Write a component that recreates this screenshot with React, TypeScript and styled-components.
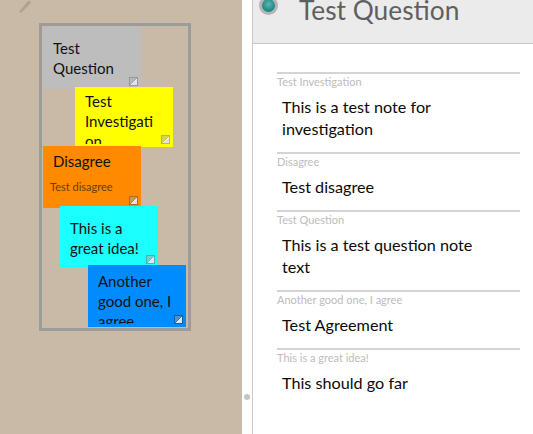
import styled, { createGlobalStyle } from 'styled-components'

const GlobalStyle = createGlobalStyle`
  html, body {
    margin: 0;
    padding: 0;
    height: 100%;
    overflow: hidden;
    font-family: 'Lato', 'Noto Sans', sans-serif;
  }
`

const Page = styled.div`
  display: flex;
  width: 533px;
  height: 434px;
  overflow: hidden;
  background: #fff;
`

const Canvas = styled.div`
  position: relative;
  width: 242px;
  flex: none;
  background: #c9baa8;
`

const Pencil = styled.svg`
  position: absolute;
  left: 17px;
  top: 0;
`

const Frame = styled.div`
  position: absolute;
  left: 39px;
  top: 23px;
  width: 146px;
  height: 302px;
  border: 3px solid #9c9c9c;
`

const Note = styled.div<{ x: number; y: number; h: number; bg: string }>`
  position: absolute;
  left: ${({ x }) => x}px;
  top: ${({ y }) => y}px;
  width: 98px;
  height: ${({ h }) => h}px;
  background: ${({ bg }) => bg};
  overflow: hidden;
`

const NoteText = styled.div<{ top: number; clip?: number }>`
  margin: ${({ top }) => top}px 13px 0 10px;
  max-height: ${({ clip }) => clip ?? 60}px;
  overflow: hidden;
  font-size: 15px;
  line-height: 20px;
  color: #111;
  overflow-wrap: anywhere;
`

const NoteSub = styled.div`
  margin: 9px 0 0 7px;
  font-size: 11px;
  line-height: 14px;
  color: #6b3d00;
`

const Resize = styled.svg`
  position: absolute;
  right: 3px;
  bottom: 3px;
`

const Splitter = styled.div`
  position: relative;
  width: 10px;
  flex: none;
  background: #fff;
`

const Dot = styled.div`
  position: absolute;
  left: 2px;
  top: 394px;
  width: 6px;
  height: 6px;
  border-radius: 50%;
  background: #c4c4c4;
`

const Panel = styled.div`
  flex: 1;
  display: flex;
  flex-direction: column;
  border-left: 1px solid #c8c8c8;
`

const Header = styled.div`
  position: relative;
  height: 43px;
  flex: none;
  display: flex;
  align-items: flex-start;
  padding-left: 46px;
  background: #ebebeb;
  border-bottom: 1px solid #c8c8c8;
`

const Ball = styled.div`
  position: absolute;
  left: 6px;
  top: -4px;
  width: 13px;
  height: 13px;
  border-radius: 50%;
  border: 3px solid #b5b5b5;
  background: radial-gradient(circle at 50% 40%, #5fb5b2, #14837f 75%);
`

const Title = styled.h1`
  margin: -6px 0 0;
  font-size: 26.3px;
  font-weight: 400;
  line-height: 32px;
  white-space: nowrap;
  color: #5f5f5f;
`

const List = styled.div`
  display: flex;
  flex-direction: column;
  width: 243px;
  margin: 28px 0 0 24px;
`

const Row = styled.div`
  border-top: 2px solid #d4d4d4;
  padding-bottom: 12px;
`

const RowLabel = styled.div`
  font-size: 11px;
  line-height: 12px;
  margin-top: 2px;
  color: #bcbcbc;
`

const RowText = styled.div`
  margin: 8px 0 0 5px;
  max-width: 205px;
  font-size: 16.2px;
  line-height: 22px;
  color: #0a0a0a;
`

const ResizeIcon = ({ tint }: { tint: string }) => (
  <Resize width="9" height="9" viewBox="0 0 9 9">
    <rect width="9" height="9" fill={tint} />
    <path d="M1 1 H8 L1 8 Z" fill="#ffffff" opacity="0.3" />
    <path d="M2 8 L8 2 V8 Z" fill="#e4e0f2" />
    <path d="M2 8 L8 2" stroke="#ffffff" strokeWidth="0.8" />
  </Resize>
)

const notes = [
  { x: 43, y: 27, h: 62, top: 11, bg: '#bdbdbd', tint: '#989898', text: 'Test Question' },
  { x: 75, y: 87, h: 60, top: 4, clip: 53, bg: '#ffff00', tint: '#bfbf20', text: 'Test Investigation' },
  { x: 43, y: 146, h: 62, top: 5, bg: '#ff8a00', tint: '#b86a10', text: 'Disagree', sub: 'Test disagree' },
  { x: 60, y: 206, h: 61, top: 12, bg: '#1cffff', tint: '#40b8b8', text: 'This is a great idea!' },
  { x: 88, y: 265, h: 62, top: 6, clip: 53, bg: '#008cff', tint: '#1060a8', text: 'Another good one, I agree' },
]

const rows = [
  { label: 'Test Investigation', text: 'This is a test note for investigation' },
  { label: 'Disagree', text: 'Test disagree' },
  { label: 'Test Question', text: 'This is a test question note text' },
  { label: 'Another good one, I agree', text: 'Test Agreement' },
  { label: 'This is a great idea!', text: 'This should go far' },
]

export default function App() {
  return (
    <Page>
      <GlobalStyle />
      <Canvas>
        <Pencil width="16" height="14" viewBox="0 0 16 14">
          <path d="M2 12 L11 1 L14 1 L13 4 L4 13 Z" fill="#aea294" />
        </Pencil>
        <Frame />
        {notes.map((n) => (
          <Note key={n.text} x={n.x} y={n.y} h={n.h} bg={n.bg}>
            <NoteText top={n.top} clip={n.clip}>
              {n.text}
            </NoteText>
            {n.sub && <NoteSub>{n.sub}</NoteSub>}
            <ResizeIcon tint={n.tint} />
          </Note>
        ))}
      </Canvas>
      <Splitter>
        <Dot />
      </Splitter>
      <Panel>
        <Header>
          <Ball />
          <Title>Test Question</Title>
        </Header>
        <List>
          {rows.map((r) => (
            <Row key={r.label}>
              <RowLabel>{r.label}</RowLabel>
              <RowText>{r.text}</RowText>
            </Row>
          ))}
        </List>
      </Panel>
    </Page>
  )
}
